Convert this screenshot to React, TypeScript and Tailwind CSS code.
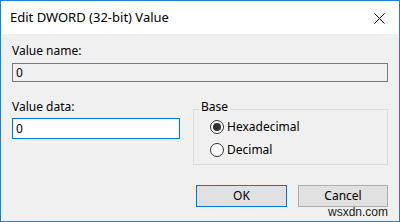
import { useState } from "react";

const font = { fontFamily: '"Noto Sans", "Open Sans", Arial, sans-serif' };

const Radio = ({
  label,
  checked,
  onClick,
}: {
  label: string;
  checked: boolean;
  onClick: () => void;
}) => (
  <button type="button" onClick={onClick} className="flex items-center h-[20px] text-[12px] text-black">
    <span className="w-[14px] h-[14px] rounded-full border border-[#333] bg-white flex items-center justify-center">
      {checked && <span className="w-[8px] h-[8px] rounded-full bg-[#333]" />}
    </span>
    <span className="ml-[3px]">{label}</span>
  </button>
);

const App = () => {
  const [base, setBase] = useState("hex");
  const [data, setData] = useState("0");

  return (
    <div
      className="relative w-[400px] h-[222px] border border-[#1883d7] bg-[#f0f0f0] flex flex-col text-black"
      style={font}
    >
      <div className="h-[33px] bg-white flex items-center justify-between pl-[9px] pr-[14px]">
        <span className="text-[13px]">Edit DWORD (32-bit) Value</span>
        <svg width="11" height="11" viewBox="0 0 11 11" className="mt-[2px]">
          <path d="M0.5 0.5 L10.5 10.5 M10.5 0.5 L0.5 10.5" stroke="#000" strokeWidth="1" />
        </svg>
      </div>

      <div className="flex-1 flex flex-col pl-[11px] pr-[11px] pt-[9px] text-[12px]">
        <label className="leading-[15px]">Value name:</label>
        <div className="mt-[5px] h-[19px] border border-[#7a7a7a] bg-[#f0f0f0] flex items-center px-[3px] leading-none">
          0
        </div>

        <div className="mt-[17px] flex">
          <div className="w-[168px] flex flex-col">
            <label className="leading-[15px]">Value data:</label>
            <input
              value={data}
              onChange={(e) => setData(e.target.value)}
              className="mt-[4px] h-[21px] border border-[#0078d7] bg-white px-[3px] text-[12px] outline-none"
            />
          </div>

          <fieldset className="ml-[13px] flex-1 border border-[#dcdcdc] h-[66px] pl-[5px] pt-[1px]">
            <legend className="px-[2px] leading-[15px] pb-[6px]">Base</legend>
            <div className="flex flex-col gap-[3px] -mt-[4px] ml-[11px]">
              <Radio label="Hexadecimal" checked={base === "hex"} onClick={() => setBase("hex")} />
              <Radio label="Decimal" checked={base === "dec"} onClick={() => setBase("dec")} />
            </div>
          </fieldset>
        </div>

        <div className="mt-[20px] flex justify-end gap-[11px]">
          <button className="w-[91px] h-[22px] border border-[#0078d7] bg-[#e1e1e1] text-[12px]">OK</button>
          <button className="w-[90px] h-[22px] border border-[#adadad] bg-[#e1e1e1] text-[12px]">Cancel</button>
        </div>
      </div>

      <span className="absolute right-[11px] bottom-[2px] text-[12px] leading-[14px] text-[#222]" style={{ fontFamily: '"Liberation Sans", Arial, sans-serif' }}>
        wsxdn.com
      </span>
    </div>
  );
};

export default App;
